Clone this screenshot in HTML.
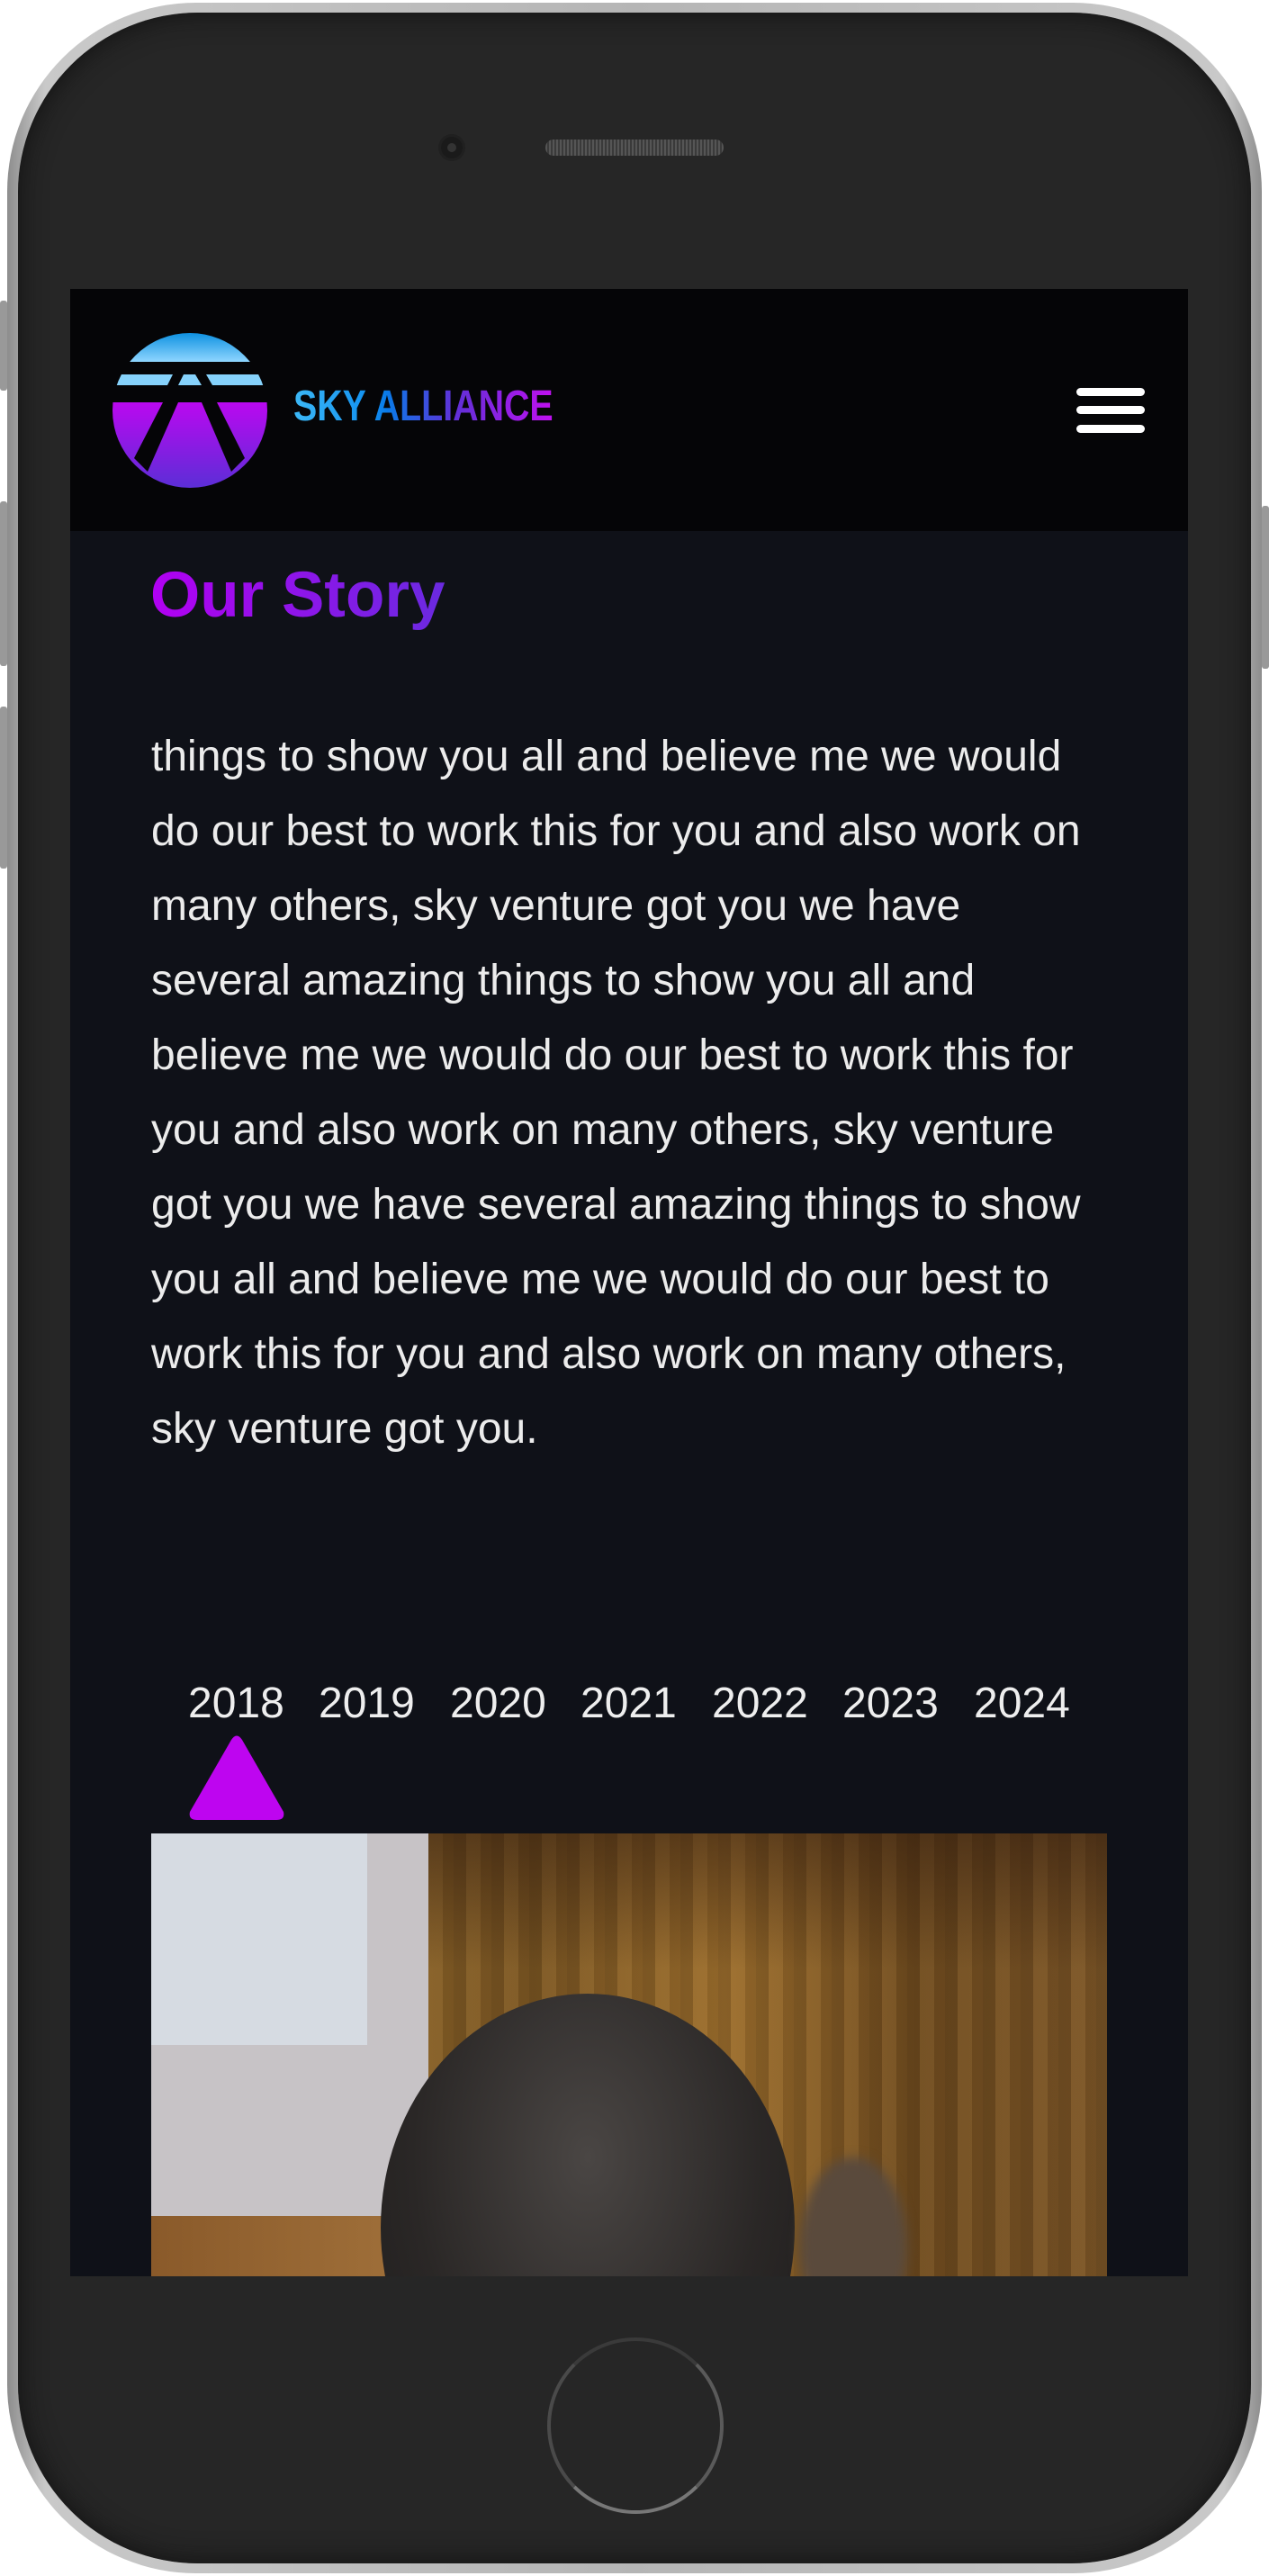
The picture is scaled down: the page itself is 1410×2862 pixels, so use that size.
<!DOCTYPE html>
<html><head><meta charset="utf-8"><style>
*{margin:0;padding:0;box-sizing:border-box}
body{width:1410px;height:2862px;background:#fff;position:relative;overflow:hidden;font-family:"Liberation Sans",Arial,sans-serif}
.abs{position:absolute}
.frame{left:8px;top:3px;width:1394px;height:2856px;border-radius:210px;background:linear-gradient(90deg,#8d8d8d,#c9c9c9 3%,#b5b5b5 50%,#c9c9c9 97%,#8d8d8d);}
.body{left:20px;top:14px;width:1370px;height:2834px;border-radius:200px;background:#262626;box-shadow:inset 0 0 30px #111}
.screen{left:78px;top:321px;width:1242px;height:2208px;background:#0f1118;overflow:hidden}
.header{left:0;top:0;width:1242px;height:269px;background:#050507}
.p{left:90px;top:478px;width:1050px;font-size:48px;line-height:83px;color:#ececec}
.yr{top:1544px;font-size:48px;color:#eee}
</style></head><body>
<div class="abs" style="left:0;top:334px;width:8px;height:100px;background:#999;border-radius:3px"></div>
<div class="abs" style="left:0;top:557px;width:8px;height:183px;background:#999;border-radius:3px"></div>
<div class="abs" style="left:0;top:785px;width:8px;height:180px;background:#999;border-radius:3px"></div>
<div class="abs" style="left:1402px;top:562px;width:8px;height:181px;background:#999;border-radius:3px"></div>
<div class="abs frame"></div>
<div class="abs body"></div>
<div class="abs" style="left:490px;top:152px;width:24px;height:24px;border-radius:50%;background:#1a1a1a;box-shadow:0 0 0 3px #202020"></div>
<div class="abs" style="left:497px;top:159px;width:10px;height:10px;border-radius:50%;background:#333"></div>
<div class="abs" style="left:606px;top:155px;width:198px;height:18px;border-radius:9px;background:repeating-linear-gradient(90deg,#555 0 2px,#3a3a3a 2px 4px);"></div>
<div class="abs" style="left:608px;top:2597px;width:196px;height:196px;border-radius:50%;border:4px solid #555;border-color:#3a3a3a #5a5a5a #777 #4a4a4a"></div>
<div class="abs screen">
 <div class="abs header">
  <svg class="abs" style="left:46px;top:48px" width="175" height="175" viewBox="0 0 175 175">
   <defs>
    <linearGradient id="sky" x1="0" y1="0" x2="0" y2="1"><stop offset="0" stop-color="#0a8fe0"/><stop offset="1" stop-color="#8fd6ff"/></linearGradient>
    <linearGradient id="pur" x1="0" y1="0" x2="0" y2="1"><stop offset="0" stop-color="#bb08f0"/><stop offset="1" stop-color="#5a2fd6"/></linearGradient>
    <clipPath id="c"><circle cx="87" cy="87" r="86"/></clipPath>
   </defs>
   <g clip-path="url(#c)">
    <rect x="0" y="0" width="175" height="33" fill="url(#sky)"/>
    <rect x="0" y="47" width="175" height="12" fill="#86d2fb"/>
    <rect x="0" y="78" width="175" height="97" fill="url(#pur)"/>
   </g>
   <polygon points="68,47 80,47 74,59 62,59" fill="#050507"/>
   <polygon points="93,47 105,47 112,59 100,59" fill="#050507"/>
   <polygon points="57,78 74,78 40,155 25,140" fill="#050507"/>
   <polygon points="100,78 117,78 148,140 133,155" fill="#050507"/>
  </svg>
  <div class="abs" style="left:248px;top:101px;font-size:48px;line-height:60px;font-weight:bold;white-space:nowrap;transform:scaleX(0.82);transform-origin:0 0;background:linear-gradient(90deg,#3cb8f6 0%,#1190f0 30%,#0a7ae8 36%,#6030d8 62%,#c010f0 100%);-webkit-background-clip:text;background-clip:text;color:transparent">SKY ALLIANCE</div>
  <div class="abs" style="left:1118px;top:110px;width:76px;height:9px;border-radius:5px;background:#fff"></div>
  <div class="abs" style="left:1118px;top:130px;width:76px;height:9px;border-radius:5px;background:#fff"></div>
  <div class="abs" style="left:1118px;top:151px;width:76px;height:9px;border-radius:5px;background:#fff"></div>
 </div>
 <div class="abs" style="left:89px;top:301px;font-size:71px;line-height:80px;font-weight:bold;white-space:nowrap;background:linear-gradient(90deg,#b200f2,#6a2ae0);-webkit-background-clip:text;background-clip:text;color:transparent">Our Story</div>
 <div class="abs p">things to show you all and believe me we would do our best to work this for you and also work on many others, sky venture got you we have several amazing things to show you all and believe me we would do our best to work this for you and also work on many others, sky venture got you we have several amazing things to show you all and believe me we would do our best to work this for you and also work on many others, sky venture got you.</div>
 <div class="abs yr" style="left:131px">2018</div>
 <div class="abs yr" style="left:276px">2019</div>
 <div class="abs yr" style="left:422px">2020</div>
 <div class="abs yr" style="left:567px">2021</div>
 <div class="abs yr" style="left:713px">2022</div>
 <div class="abs yr" style="left:858px">2023</div>
 <div class="abs yr" style="left:1004px">2024</div>
 <svg class="abs" style="left:131px;top:1606px" width="108" height="96" viewBox="0 0 108 96"><path d="M48 6 Q54 -3 60 6 L106 86 Q108 95 98 95 L10 95 Q0 95 2 86 Z" fill="#be05f0"/></svg>
 <div class="abs" style="left:90px;top:1716px;width:1062px;height:500px;overflow:hidden;background:linear-gradient(90deg,#6a4a22,#8a6228 20%,#7a5522 40%,#9a6c2c 60%,#6e4a1e 80%,#7a5426);">
  <div class="abs" style="left:0;top:0;width:1062px;height:500px;background:repeating-linear-gradient(90deg,rgba(0,0,0,.12) 0 14px,rgba(255,220,150,.06) 14px 30px,rgba(0,0,0,.07) 30px 42px)"></div>
  <div class="abs" style="left:0;top:0;width:1062px;height:500px;background:linear-gradient(180deg,rgba(40,20,10,.5),rgba(0,0,0,0) 30%)"></div>
  <div class="abs" style="left:0;top:0;width:308px;height:500px;background:#c7c3c6"></div>
  <div class="abs" style="left:0;top:0;width:240px;height:235px;background:#d6dbe2"></div>
  <div class="abs" style="left:0;top:425px;width:290px;height:80px;background:linear-gradient(90deg,#8a5a2a,#a0703a)"></div>
  <div class="abs" style="left:255px;top:178px;width:460px;height:520px;border-radius:50%;background:radial-gradient(ellipse at 50% 35%,#4a4644,#2a2726 60%,#1e1c1c)"></div>
  <div class="abs" style="left:720px;top:360px;width:120px;height:200px;border-radius:50%;background:#5a4a3c;filter:blur(6px)"></div>
 </div>
</div>
</body></html>
